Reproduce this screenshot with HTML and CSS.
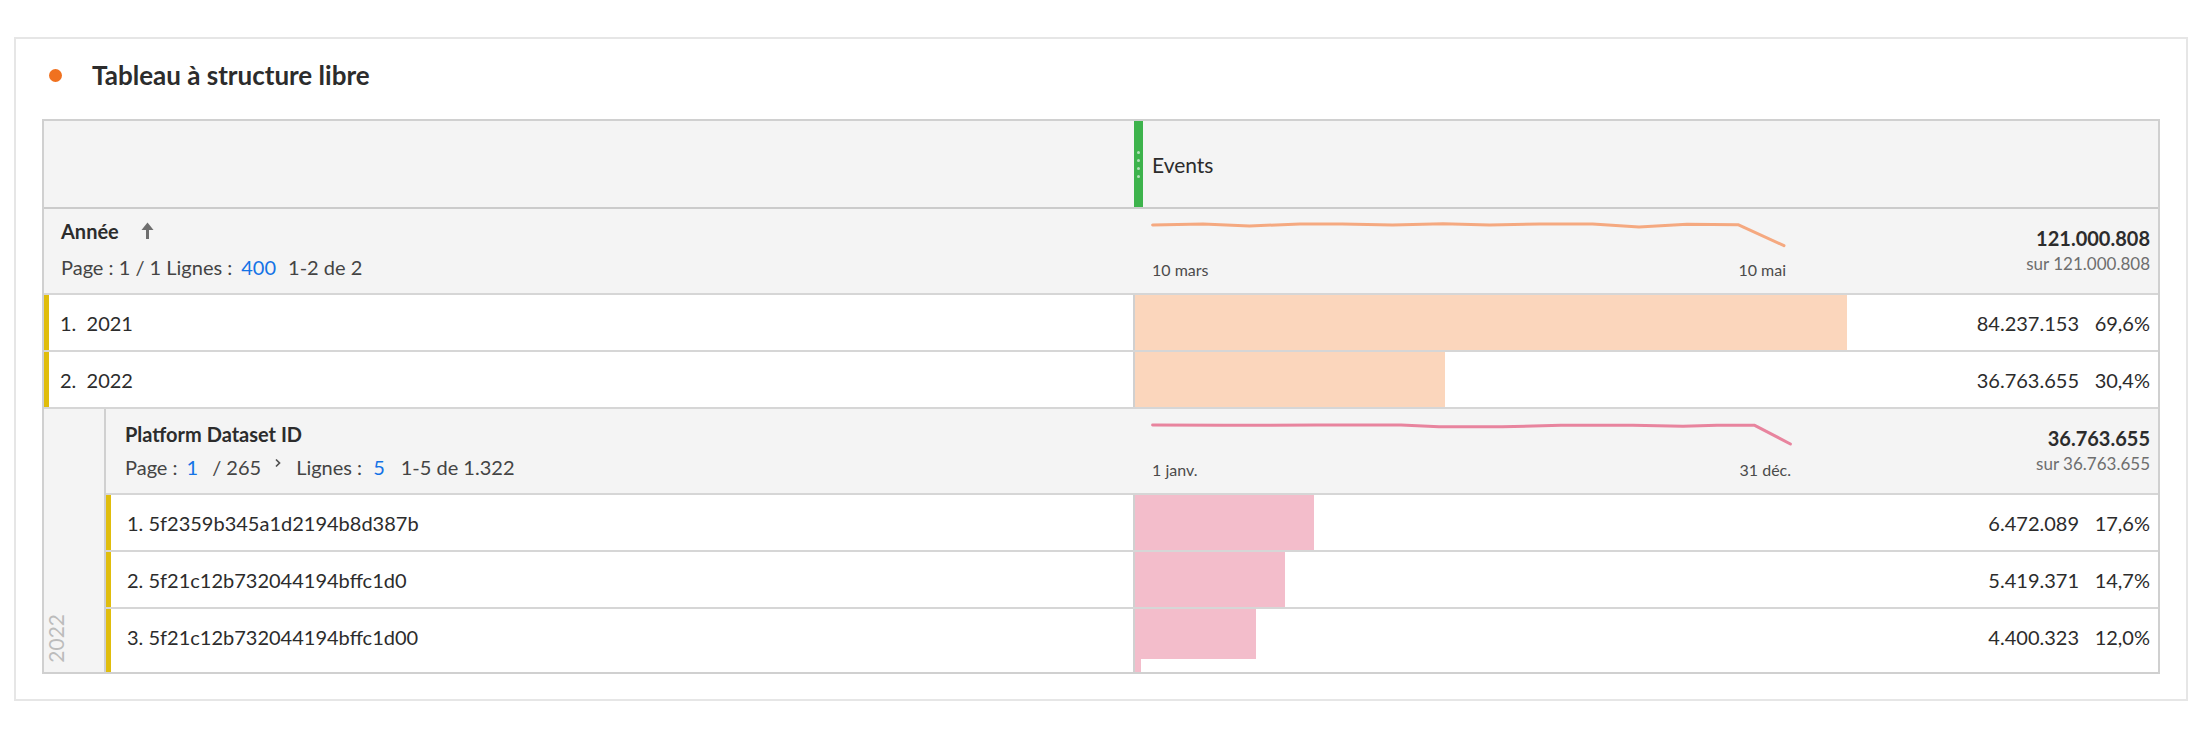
FILE: index.html
```html
<!DOCTYPE html>
<html lang="fr">
<head>
<meta charset="utf-8">
<title>Tableau à structure libre</title>
<link rel="stylesheet" href="styles.css">
</head>
<body>
<div class="panel">
  <div class="panel-title"><span class="dot"></span><h1>Tableau à structure libre</h1></div>
  <div class="ftable">
    <div class="row head">
      <div class="cell"></div>
      <div class="cell metric-head">
        <div class="grip"><i></i><i></i><i></i><i></i></div>
        <span class="metric-name">Events</span>
      </div>
    </div>

    <div class="row summary">
      <div class="cell dim-sum">
        <div class="dim-name">Année <svg class="sort" width="15" height="19" viewBox="0 0 15 19"><path d="M7.5 18V5" stroke="#6e6e6e" stroke-width="3" fill="none"/><path d="M1.5 9L7.5 1.5 13.5 9Z" fill="#6e6e6e"/></svg></div>
        <div class="pager">Page : 1 / 1 Lignes :<span class="lnk">400</span><span class="range">1-2 de 2</span></div>
      </div>
      <div class="cell metric-sum">
        <div class="spark">
          <svg width="645" height="30" viewBox="0 0 645 30"><polyline points="2.6,7 53,6 99.5,8 150,6 192,6 242.6,7 293,5.7 339.5,7 390,6 442.6,6 489,9 537,6.3 588,6.7 634,27.7" fill="none" stroke="#f5a980" stroke-width="3" stroke-linejoin="round" stroke-linecap="round"/></svg>
          <div class="axis axis-top"><span>10 mars</span><span>10 mai</span></div>
        </div>
        <div class="totals"><b>121.000.808</b><span>sur 121.000.808</span></div>
      </div>
    </div>

    <div class="row data">
      <div class="cell label">1.&nbsp; 2021</div>
      <div class="cell value">
        <div class="bar peach" style="width:712px"></div>
        <div class="nums"><span class="num">84.237.153</span><span class="pct">69,6%</span></div>
      </div>
    </div>
    <div class="row data">
      <div class="cell label">2.&nbsp; 2022</div>
      <div class="cell value">
        <div class="bar peach" style="width:310px"></div>
        <div class="nums"><span class="num">36.763.655</span><span class="pct">30,4%</span></div>
      </div>
    </div>

    <div class="nested">
      <div class="strip"><span>2022</span></div>
      <div class="nested-body">
        <div class="row summary sub">
          <div class="cell dim-sum">
            <div class="dim-name">Platform Dataset ID</div>
            <div class="pager">Page :<span class="lnk">1</span><span class="of">/ 265</span><svg class="chev" width="6" height="10" viewBox="0 0 6 10"><path d="M1 1.5L4.5 5 1 8.5" stroke="#505050" stroke-width="1.7" fill="none"/></svg>Lignes :<span class="lnk lnk-rows">5</span><span class="range range-sub">1-5 de 1.322</span></div>
          </div>
          <div class="cell metric-sum">
            <div class="spark">
              <svg width="645" height="30" viewBox="0 0 645 30"><polyline points="2.6,7 74,7.3 167,7 251,7 289,8.7 352,8.7 411,7.3 482.6,7.3 533,8.3 567,7.3 604.7,7.3 640.4,26" fill="none" stroke="#e8849e" stroke-width="3" stroke-linejoin="round" stroke-linecap="round"/></svg>
              <div class="axis axis-sub"><span>1 janv.</span><span>31 déc.</span></div>
            </div>
            <div class="totals"><b>36.763.655</b><span>sur 36.763.655</span></div>
          </div>
        </div>

        <div class="row data sub">
          <div class="cell label">1. 5f2359b345a1d2194b8d387b</div>
          <div class="cell value">
            <div class="bar pink" style="width:179px"></div>
            <div class="nums"><span class="num">6.472.089</span><span class="pct">17,6%</span></div>
          </div>
        </div>
        <div class="row data sub">
          <div class="cell label">2. 5f21c12b732044194bffc1d0</div>
          <div class="cell value">
            <div class="bar pink" style="width:150px"></div>
            <div class="nums"><span class="num">5.419.371</span><span class="pct">14,7%</span></div>
          </div>
        </div>
        <div class="row data sub last">
          <div class="cell label">3. 5f21c12b732044194bffc1d00</div>
          <div class="cell value">
            <div class="bar-stack">
              <div class="bar pink short" style="width:121px"></div>
              <div class="sliver"></div>
            </div>
            <div class="nums"><span class="num">4.400.323</span><span class="pct">12,0%</span></div>
          </div>
        </div>
      </div>
    </div>
  </div>
</div>
</body>
</html>
```

FILE: styles.css
```css
* { box-sizing: border-box; }
html, body { margin: 0; padding: 0; background: #ffffff; }
body {
  font-family: Lato, "Open Sans", "Liberation Sans", sans-serif;
  color: #2c2c2c;
}

.panel {
  width: 2174px;
  margin: 37px 0 0 14px;
  border: 2px solid #e6e6e6;
  padding: 21px 26px 25px 26px;
}
.panel-title {
  display: flex;
  align-items: center;
  height: 30px;
  margin-bottom: 29px;
  padding-left: 7px;
}
.dot {
  width: 13px;
  height: 13px;
  border-radius: 50%;
  background: #f0711f;
  margin-right: 30px;
  flex: none;
}
.panel-title h1 {
  margin: 0;
  font-size: 26px;
  line-height: 30px;
  font-weight: 700;
  color: #2c2c2c;
}

.ftable { border: 2px solid #d0d0d0; }

.row {
  display: grid;
  grid-template-columns: 1089px 1fr;
  border-bottom: 2px solid #d6d6d6;
}
.row.sub { grid-template-columns: 1027px 1fr; }

.row.head {
  height: 88px;
  background: #f4f4f4;
  border-bottom-color: #cbcbcb;
}
.metric-head {
  display: flex;
  align-items: center;
}
.grip {
  align-self: stretch;
  width: 9px;
  margin-left: 1px;
  background: #3db34c;
  display: flex;
  flex-direction: column;
  align-items: center;
  justify-content: center;
  gap: 5px;
}
.grip i {
  display: block;
  width: 3px;
  height: 3px;
  border-radius: 50%;
  background: #b3e0b8;
  margin-right: 1px;
}
.metric-name {
  font-size: 21px;
  margin-left: 9px;
  color: #2c2c2c;
}

.row.summary {
  height: 86px;
  background: #f4f4f4;
}
.dim-sum {
  padding: 10px 0 0 17px;
}
.row.sub .dim-sum { padding: 13px 0 0 19px; }
.dim-name {
  font-size: 20px;
  line-height: 24px;
  font-weight: 700;
  display: flex;
  align-items: center;
}
.sort { margin-left: 21px; margin-top: -2px; }
.pager {
  margin-top: 12px;
  font-size: 20px;
  line-height: 24px;
  color: #444444;
  display: flex;
  align-items: center;
  white-space: pre;
}
.row.sub .pager { margin-top: 9px; }
.lnk { color: #1473e6; margin-left: 9px; }
.range { margin-left: 12px; }
.of { margin-left: 14px; }
.chev { margin: -9px 15px 0 14px; }
.lnk-rows { margin-left: 11px; }
.range-sub { margin-left: 16px; }

.metric-sum {
  display: flex;
  padding: 9px 8px 0 17px;
}
.spark {
  width: 645px;
  flex: none;
}
.spark svg { display: block; }
.axis {
  display: flex;
  justify-content: space-between;
  margin-top: 12px;
  font-size: 16px;
  line-height: 19px;
  color: #4b4b4b;
  padding-left: 2px;
}
.axis-top { padding-right: 9px; }
.axis-sub { padding-right: 4px; }
.totals {
  margin-left: auto;
  display: flex;
  flex-direction: column;
  align-items: flex-end;
  padding-top: 8px;
  line-height: 25px;
}
.totals b { font-size: 20px; font-weight: 700; color: #2c2c2c; }
.totals span { font-size: 17px; color: #6e6e6e; }

.row.data {
  height: 57px;
  background: #ffffff;
}
.label {
  display: flex;
  align-items: center;
  border-left: 5px solid #e0bd0c;
  padding-left: 11px;
  font-size: 20px;
  color: #2c2c2c;
  white-space: pre;
}
.row.sub .label { padding-left: 16px; }
.value {
  display: flex;
  border-left: 2px solid #d0d0d0;
}
.bar { flex: none; }
.bar.peach { background: #fbd6bc; }
.bar.pink { background: #f3bdcb; }
.bar-stack {
  display: flex;
  flex-direction: column;
}
.bar.short { height: 50px; }
.sliver {
  flex: 1;
  width: 6px;
  background: #f3bdcb;
}
.nums {
  margin-left: auto;
  align-self: center;
  display: flex;
  padding-right: 8px;
  font-size: 20px;
  color: #2c2c2c;
}
.pct {
  width: 71px;
  text-align: right;
}
.row.last {
  height: 63px;
  border-bottom: none;
}
.row.last .label,
.row.last .nums { padding-bottom: 7px; }

.nested { display: flex; }
.strip {
  width: 62px;
  flex: none;
  background: #f4f4f4;
  border-right: 2px solid #d0d0d0;
  display: flex;
  flex-direction: column;
  justify-content: flex-end;
  padding: 0 0 9px 2px;
}
.strip span {
  writing-mode: vertical-rl;
  transform: rotate(180deg);
  font-size: 21px;
  line-height: 20px;
  color: #bcbcbc;
}
.nested-body { flex: 1; }
```
